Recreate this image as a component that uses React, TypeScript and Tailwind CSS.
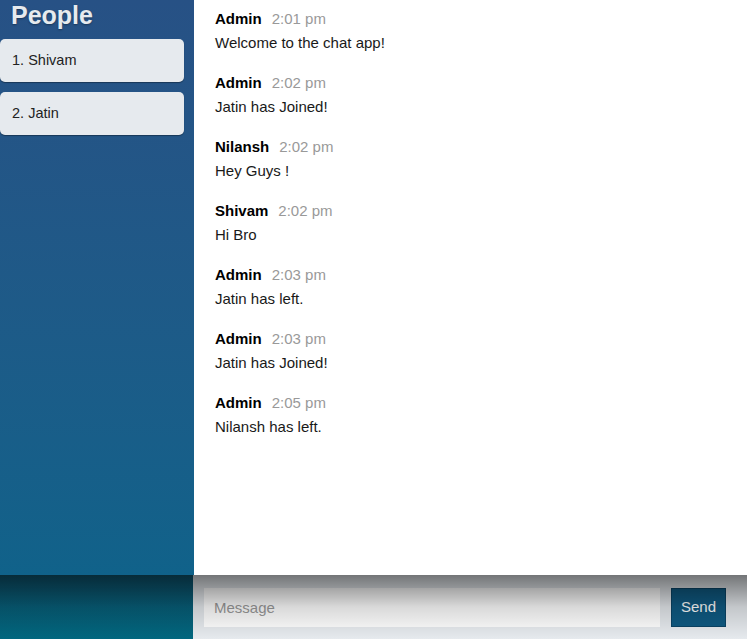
const people = ["Shivam", "Jatin"];

const messages = [
  { from: "Admin", at: "2:01 pm", text: "Welcome to the chat app!" },
  { from: "Admin", at: "2:02 pm", text: "Jatin has Joined!" },
  { from: "Nilansh", at: "2:02 pm", text: "Hey Guys !" },
  { from: "Shivam", at: "2:02 pm", text: "Hi Bro" },
  { from: "Admin", at: "2:03 pm", text: "Jatin has left." },
  { from: "Admin", at: "2:03 pm", text: "Jatin has Joined!" },
  { from: "Admin", at: "2:05 pm", text: "Nilansh has left." },
];

const App = () => {
  return (
    <div className="h-[639px] w-[747px] overflow-hidden flex flex-col font-['Liberation_Sans',Arial,sans-serif] text-[15px] text-[#191919]">
      <div className="flex h-[575px]">
        <div className="w-[194px] shrink-0 bg-gradient-to-b from-[#275185] to-[#10628a]">
          <h3 className="pl-[11px] pt-[1px] h-[39px] text-[25px] font-bold leading-[28px] text-[#e6eaee] [text-shadow:0_1px_2px_rgba(0,0,0,0.35)]">
            People
          </h3>
          <ul className="flex flex-col gap-[10px]">
            {people.map((name, i) => (
              <li
                key={name}
                className="w-[184px] h-[43px] flex items-center pl-[12px] rounded-[5px] bg-[#e6eaee] text-[14.5px] text-[#222] shadow-[0_1px_1px_rgba(0,0,0,0.35)]"
              >
                {i + 1}. {name}
              </li>
            ))}
          </ul>
        </div>
        <div className="flex-1 bg-white pl-[21px] pt-[8px]">
          <ol className="flex flex-col gap-[18px]">
            {messages.map((m, i) => (
              <li key={i} className="leading-[22px]">
                <div className="flex items-baseline gap-[10px]">
                  <span className="font-bold text-[15px] text-black">{m.from}</span>
                  <span className="text-[15px] text-[#999]">{m.at}</span>
                </div>
                <p className="mt-[2px] text-[15px]">{m.text}</p>
              </li>
            ))}
          </ol>
        </div>
      </div>
      <div className="relative flex h-[64px]">
        <div className="w-[193px] shrink-0 bg-gradient-to-b from-[#0d5773] to-[#00677f]" />
        <div className="w-px bg-[#e6eaee]" />
        <form className="flex-1 flex items-center gap-[11px] bg-[#e6eaee] pl-[10px] pr-[21px]">
          <input
            placeholder="Message"
            className="flex-1 h-[39px] bg-white px-[10px] text-[15px] placeholder:text-[#999] outline-none"
          />
          <button
            type="button"
            className="w-[55px] h-[39px] bg-[#0f5a82] border border-[#0a4466] text-[15px] text-white"
          >
            Send
          </button>
        </form>
        <div className="pointer-events-none absolute inset-0 bg-gradient-to-b from-black/50 via-black/15 via-50% to-transparent" />
      </div>
    </div>
  );
};

export default App;
